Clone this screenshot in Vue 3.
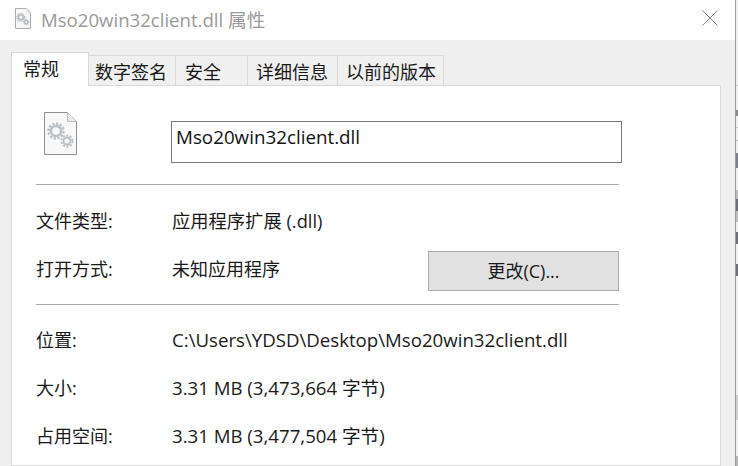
<template>
  <div class="window">
    <div class="main">
      <div class="titlebar">
        <svg class="title-icon" width="16" height="21" viewBox="0 0 33 43">
          <path d="M1 1h22l9 9v32H1z" fill="#f7f7f7" stroke="#a8a8a8" stroke-width="2"/>
          <g fill="none" stroke="#b4b7ba">
            <circle cx="12" cy="19" r="5" stroke-width="3"/>
            <circle cx="12" cy="19" r="8" stroke-width="2.500" stroke-dasharray="2.500 1.700"/>
            <circle cx="23" cy="29" r="3.500" stroke-width="2.500"/>
            <circle cx="23" cy="29" r="5.500" stroke-width="2" stroke-dasharray="2 1.500"/>
          </g>
        </svg>
        <span class="title-text">{{ fileName }} 属性</span>
        <svg class="close-icon" width="16" height="16" viewBox="0 0 16 16">
          <path d="M.5.5l15 15M15.500.5l-15 15" stroke="#8a8a8a" stroke-width="1" fill="none"/>
        </svg>
      </div>

      <div class="body">
        <div class="tabs">
          <div
            v-for="(tab, i) in tabs"
            :key="tab.name"
            class="tab"
            :class="{ active: i === 0 }"
            :style="{ width: tab.width + 'px', paddingLeft: tab.pad + 'px' }"
          >{{ tab.name }}</div>
        </div>

        <div class="panel">
          <div class="head-row">
            <svg class="file-icon" width="33" height="43" viewBox="0 0 33 43">
              <path d="M.5.5h23l9 9v33H.5z" fill="#f8f8f8" stroke="#8f8f8f"/>
              <path d="M23.500.5v9h9z" fill="#ececec" stroke="#bdbdbd"/>
              <g fill="none" stroke="#bcc0c4">
                <circle cx="12" cy="19" r="5" stroke-width="2.500"/>
                <circle cx="12" cy="19" r="7.500" stroke-width="2.500" stroke-dasharray="2.400 1.500"/>
                <circle cx="23" cy="29" r="3.500" stroke-width="2"/>
                <circle cx="23" cy="29" r="5.500" stroke-width="2" stroke-dasharray="2 1.500"/>
              </g>
            </svg>
            <div class="name-box">{{ fileName }}</div>
          </div>

          <hr class="line" />

          <div class="row type-row">
            <span class="label">文件类型:</span>
            <span class="value">应用程序扩展 (.dll)</span>
          </div>
          <div class="row open-row">
            <span class="label">打开方式:</span>
            <span class="value">未知应用程序</span>
            <button class="change-btn">更改(C)...</button>
          </div>

          <hr class="line second" />

          <div class="details">
            <div v-for="item in details" :key="item.label" class="row detail-row">
              <span class="label">{{ item.label }}</span>
              <span class="value">{{ item.value }}</span>
            </div>
          </div>
        </div>
      </div>
    </div>

    <!-- window behind the dialog, only a sliver shows -->
    <div class="behind">
      <span
        v-for="mark in marks"
        :key="mark.top"
        class="mark"
        :style="{ top: mark.top + 'px', height: mark.height + 'px', background: mark.color }"
      ></span>
    </div>
  </div>
</template>

<script setup>
const fileName = 'Mso20win32client.dll'

const tabs = [
  { name: '常规', width: 78, pad: 11 },
  { name: '数字签名', width: 87, pad: 6 },
  { name: '安全', width: 72, pad: 9 },
  { name: '详细信息', width: 90, pad: 8 },
  { name: '以前的版本', width: 106, pad: 8 }
]

const details = [
  { label: '位置:', value: 'C:\\Users\\YDSD\\Desktop\\Mso20win32client.dll' },
  { label: '大小:', value: '3.31 MB (3,473,664 字节)' },
  { label: '占用空间:', value: '3.31 MB (3,477,504 字节)' }
]

const marks = [
  { top: 85, height: 1, color: '#c8c8c8' },
  { top: 110, height: 6, color: '#8a8a8a' },
  { top: 127, height: 1, color: '#c8c8c8' },
  { top: 140, height: 1, color: '#b8b8b8' },
  { top: 153, height: 15, color: '#7c7f8c' },
  { top: 190, height: 32, color: '#bdbdbd' },
  { top: 199, height: 12, color: '#6d6e78' },
  { top: 232, height: 12, color: '#6d6e78' },
  { top: 264, height: 12, color: '#6d6e78' },
  { top: 395, height: 25, color: '#cfcfcf' },
  { top: 456, height: 10, color: '#b5b5b5' }
]
</script>

<style>
html, body {
  margin: 0;
  background: #fff;
  overflow: hidden;
}
</style>

<style scoped>
.window {
  display: flex;
  width: 738px;
  height: 466px;
  overflow: hidden;
  background: #fff;
  font-family: "Open Sans", "Noto Sans CJK SC", sans-serif;
  font-size: 18px;
  color: #1a1a1a;
}

.main {
  width: 735px;
  flex: none;
}

.titlebar {
  display: flex;
  align-items: center;
  height: 40px;
  padding: 0 0 4px 15px;
  box-sizing: border-box;
}

.title-icon {
  margin-right: 10px;
}

.title-text {
  font-size: 18.6px;
  color: #9a9a9a;
}

.close-icon {
  margin-left: auto;
  margin-right: 17px;
}

.body {
  height: 426px;
  box-sizing: border-box;
  background: #efefef;
  padding: 12px 14px 0 11px;
}

.tabs {
  display: flex;
  align-items: flex-end;
  height: 33px;
}

.tab {
  box-sizing: border-box;
  height: 30px;
  border: 1px solid #d9d9d9;
  border-left: 0;
  border-bottom: 0;
  background: #f0f0f0;
  line-height: 33px;
}

.tab.active {
  height: 34px;
  margin-bottom: -1px;
  background: #fff;
  border-left: 1px solid #d9d9d9;
  line-height: 32px;
  position: relative;
  z-index: 1;
}

.panel {
  box-sizing: border-box;
  height: 381px;
  background: #fff;
  border: 1px solid #d9d9d9;
  padding: 0 24px;
}

.head-row {
  display: flex;
  align-items: flex-start;
  box-sizing: border-box;
  height: 98px;
  padding-top: 26px;
}

.file-icon {
  margin-left: 8px;
}

.name-box {
  box-sizing: border-box;
  width: 451px;
  height: 42px;
  margin-left: 94px;
  margin-top: 9px;
  padding: 1px 4px;
  border: 1px solid #7a7a7a;
  font-size: 18.8px;
  line-height: 28px;
  color: #111;
}

.line {
  margin: 0;
  border: 0;
  height: 1px;
  width: 583px;
  background: #a9a9a9;
}

.row {
  display: flex;
  align-items: flex-start;
  width: 583px;
  line-height: 26px;
}

.label {
  width: 136px;
  flex: none;
}

.value {
  font-size: 18.65px;
}

.type-row {
  margin-top: 23px;
  height: 26px;
}

.type-row .value {
  font-size: 18.3px;
}

.open-row {
  margin-top: 17px;
  height: 40px;
}

.open-row .label,
.open-row .value {
  padding-top: 5px;
  font-size: 18px;
}

.change-btn {
  box-sizing: border-box;
  width: 191px;
  height: 40px;
  margin-left: auto;
  padding: 0;
  background: #e1e1e1;
  border: 1px solid #adadad;
  font: inherit;
  color: #1a1a1a;
}

.second {
  margin-top: 13px;
}

.details {
  padding-top: 22px;
}

.detail-row {
  height: 26px;
  margin-bottom: 22px;
}

.behind {
  position: relative;
  flex: 1;
  box-sizing: border-box;
  border-left: 1px solid #9a9a9a;
  background: #f0f0f0;
}

.mark {
  position: absolute;
  left: 0;
  width: 2px;
}
</style>
